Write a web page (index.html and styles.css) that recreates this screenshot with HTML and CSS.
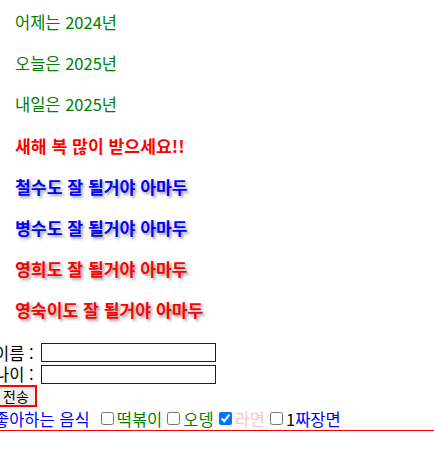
FILE: index.html
```html
<!DOCTYPE html>
<html lang="ko">
<head>
  <meta charset="UTF-8" />
  <title>연습</title>
  <link rel="stylesheet" href="styles.css">
</head>
<body>
  <div class="messages">
    <p class="msg day">어제는 2024년</p>
    <p class="msg day">오늘은 2025년</p>
    <p class="msg day">내일은 2025년</p>
    <p class="msg greet">새해 복 많이 받으세요!!</p>
    <p class="msg wish boy">철수도 잘 될거야 아마두</p>
    <p class="msg wish boy">병수도 잘 될거야 아마두</p>
    <p class="msg wish girl">영희도 잘 될거야 아마두</p>
    <p class="msg wish girl">영숙이도 잘 될거야 아마두</p>
  </div>

  <form class="profile" onsubmit="return false">
    <div class="row">이름 : <input class="text-input" type="text" /></div>
    <div class="row">나이 : <input class="text-input" type="text" /></div>
    <button class="send-btn" type="submit">전송</button>
    <div class="foods">
      <span class="foods-title">좋아하는 음식</span>
      <label class="food green"><input type="checkbox" />떡볶이</label>
      <label class="food green"><input type="checkbox" />오뎅</label>
      <label class="food pink"><input type="checkbox" checked />라면</label>
      <label class="food blue"><input type="checkbox" /><span class="num">1</span>짜장면</label>
    </div>
  </form>
</body>
</html>
```

FILE: styles.css
```css
body {
  font-family: "Noto Sans CJK KR", "Noto Sans", sans-serif;
  font-size: 16.5px;
  margin: 0;
  background: white;
  overflow: hidden;
}
.messages {
  padding-top: 10px;
  padding-left: 15px;
}
.msg {
  margin: 0 0 16px;
  line-height: 25px;
}
.day {
  color: green;
}
.greet {
  color: red;
  font-weight: bold;
  font-size: 17.2px;
}
.wish {
  font-weight: bold;
  font-size: 17.2px;
  text-shadow: 2px 2px 3px #999;
}
.boy {
  color: blue;
}
.girl {
  color: red;
}
.profile {
  margin-top: 20px;
  margin-left: -6px;
}
.row {
  display: flex;
  align-items: center;
  height: 21.5px;
  white-space: pre;
  color: black;
}
.text-input {
  box-sizing: border-box;
  width: 175px;
  height: 19px;
  padding: 1px;
  border: 1px solid blue;
  margin-left: 3px;
  outline: none;
}
.send-btn {
  display: block;
  box-sizing: border-box;
  height: 22px;
  margin-left: 1px;
  padding: 0 6px;
  border: 2px solid red;
  background: #efefef;
  font-family: "Noto Sans CJK KR", sans-serif;
  font-size: 14px;
  line-height: 16px;
  color: black;
}
.foods {
  display: flex;
  align-items: center;
  height: 23px;
  border-bottom: 1px solid red;
  margin-right: -6px;
  white-space: nowrap;
}
.foods-title {
  color: blue;
  margin-right: 7px;
}
.food {
  display: flex;
  align-items: center;
  margin-right: 1px;
}
.food input {
  margin: 3px 3px 3px 4px;
}
.green {
  color: green;
}
.pink {
  color: pink;
}
.blue {
  color: blue;
}
.num {
  color: black;
}
```
